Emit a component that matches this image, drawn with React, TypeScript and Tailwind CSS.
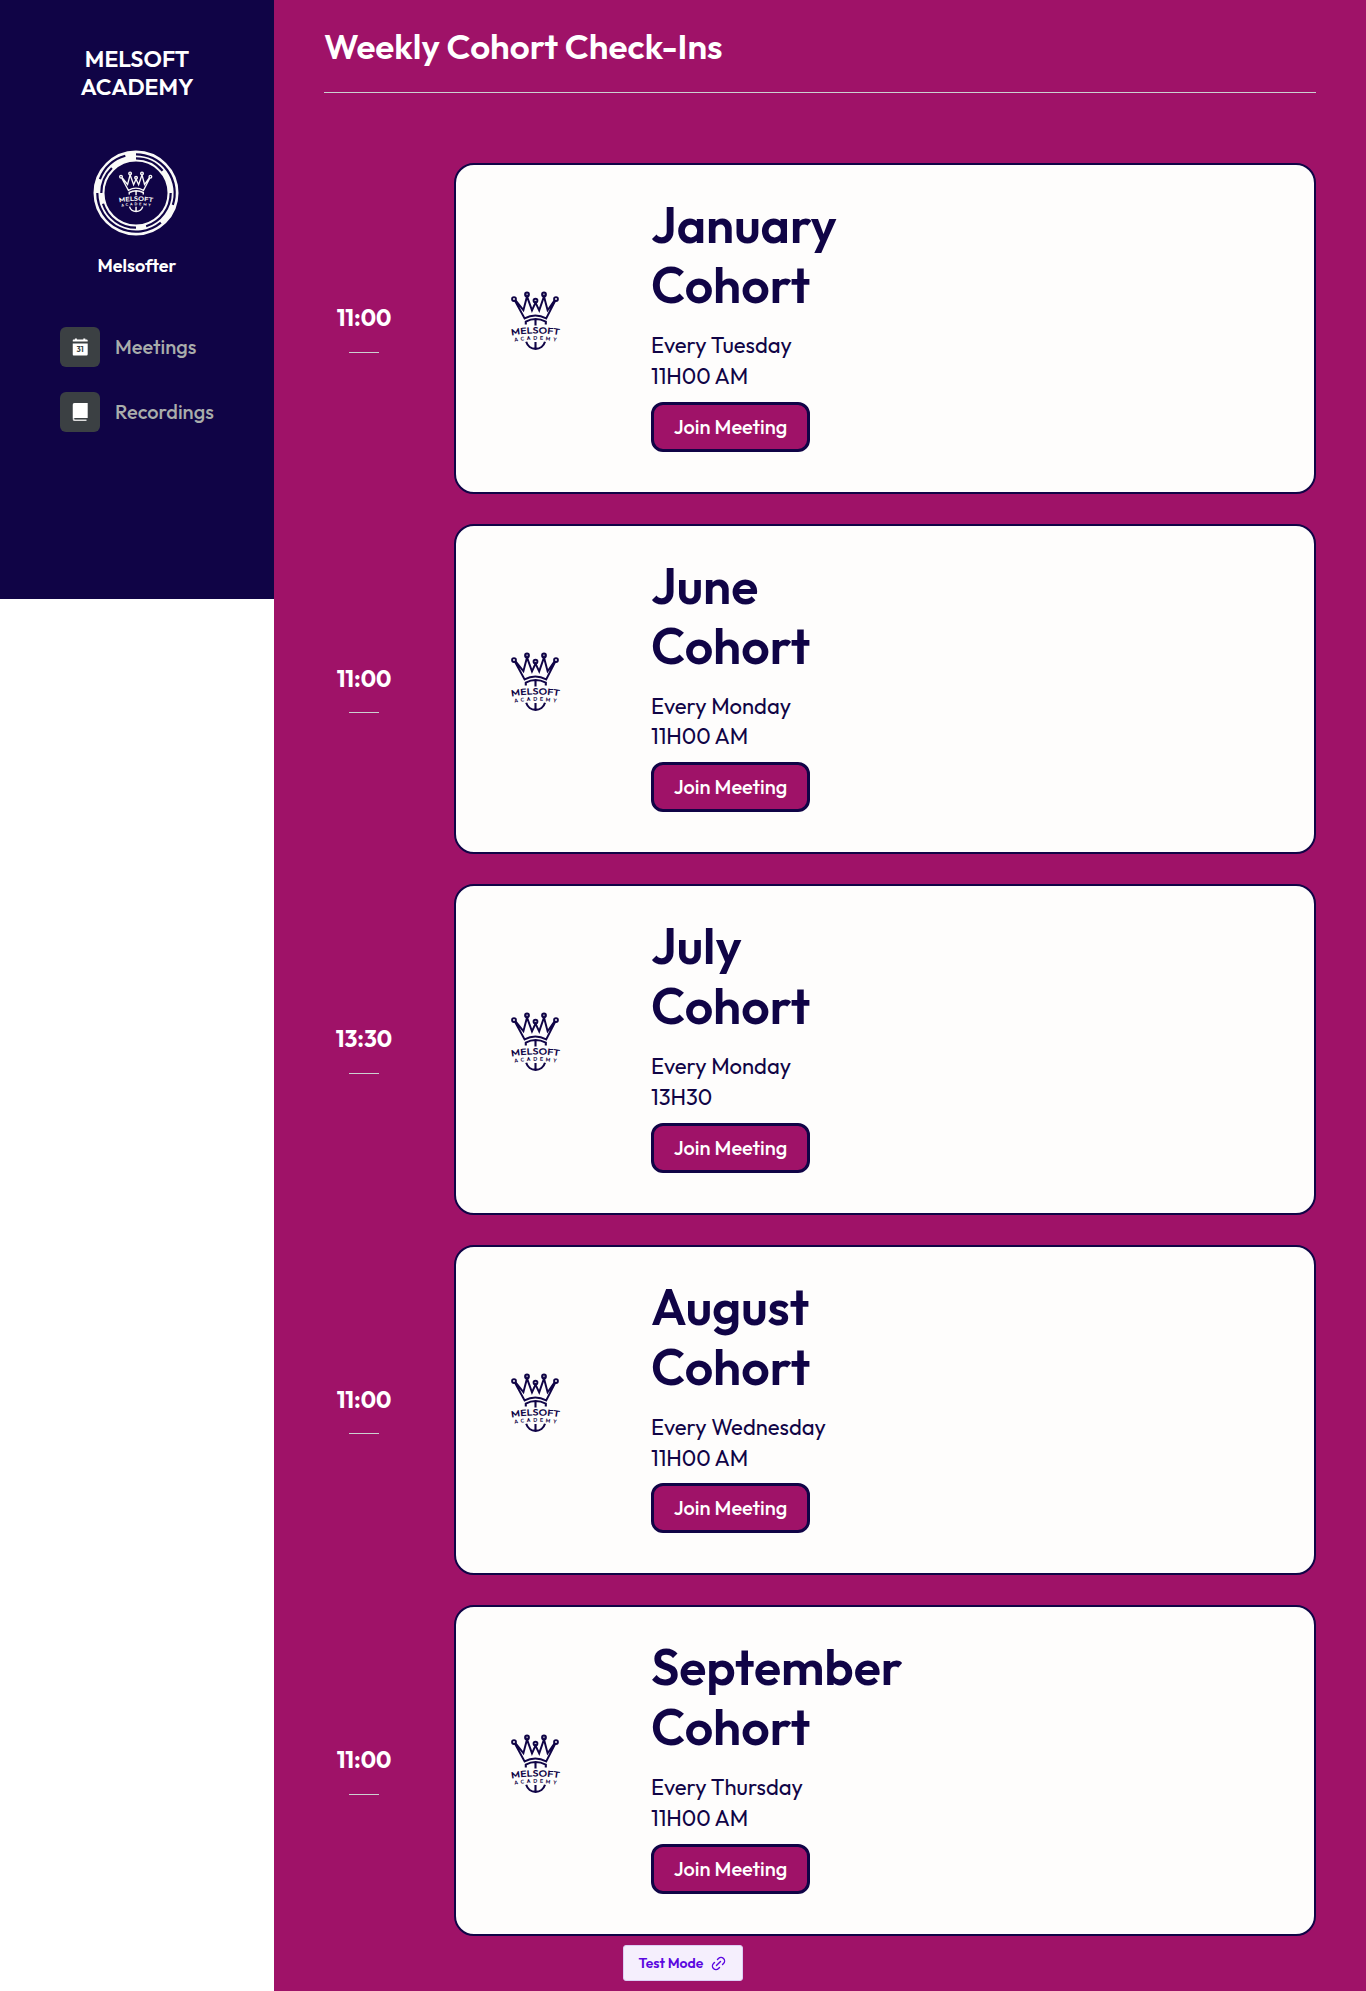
import type { ReactNode } from "react";
import { Link2 } from "lucide-react";

type Cohort = { month: string; day: string; at: string; clock: string };

const cohorts: Cohort[] = [
  { month: "January", day: "Every Tuesday", at: "11H00 AM", clock: "11:00" },
  { month: "June", day: "Every Monday", at: "11H00 AM", clock: "11:00" },
  { month: "July", day: "Every Monday", at: "13H30", clock: "13:30" },
  { month: "August", day: "Every Wednesday", at: "11H00 AM", clock: "11:00" },
  { month: "September", day: "Every Thursday", at: "11H00 AM", clock: "11:00" },
];

function CrownMark({ id }: { id: string }) {
  return (
    <g fill="none" stroke="currentColor" strokeWidth="1.95">
      <circle cx="14" cy="19" r="1.9" />
      <circle cx="27" cy="14.4" r="1.9" />
      <circle cx="35.5" cy="20.6" r="1.9" />
      <circle cx="44" cy="14.4" r="1.9" />
      <circle cx="56" cy="19" r="1.9" />
      <path d="M15 20.8 24.6 38.4Q35.3 32.4 46.2 38.4L55.2 20.8M15.6 20.4 23.4 30.2 27 16.4 32 30.4 35.5 22.6 39.2 30.4 44 16.4 47.6 30.2 54.6 20.4" />
      <path d="M25.8 44.6V41.6Q35.5 36.4 45.8 41.6V44.6M35.5 39.4V45.4" strokeWidth="2.1" />
      <path d="M26.2 61.8A9.8 9.8 0 0 0 45 61.8M35.5 62V68.6" strokeWidth="2.1" />
      <path id={`${id}-name`} d="M11.6 55.6Q35.5 51.4 59.8 55.4" stroke="none" />
      <path id={`${id}-sub`} d="M14.6 61.8Q35.5 57.6 57 61.8" stroke="none" />
      <g fill="currentColor" stroke="none" className="font-[Outfit,Lato,sans-serif] font-semibold">
        <text fontSize="9" textLength="48" lengthAdjust="spacingAndGlyphs">
          <textPath href={`#${id}-name`}>MELSOFT</textPath>
        </text>
        <text fontSize="5.4" textLength="42" lengthAdjust="spacing">
          <textPath href={`#${id}-sub`}>ACADEMY</textPath>
        </text>
      </g>
    </g>
  );
}

function arc(r: number, from: number, to: number) {
  const point = (deg: number) => {
    const a = (deg * Math.PI) / 180;
    return `${(43 + r * Math.sin(a)).toFixed(2)} ${(43 - r * Math.cos(a)).toFixed(2)}`;
  };
  return `M${point(from)}A${r} ${r} 0 ${to - from > 180 ? 1 : 0} 1 ${point(to)}`;
}

function Badge() {
  return (
    <svg viewBox="0 0 86 86" className="size-[86px] text-[#fafaf8]">
      <circle cx="43" cy="43" r="37" fill="none" stroke="currentColor" strokeWidth="11" />
      <g fill="none" stroke="#100446" strokeWidth="2.2">
        <path d={arc(38.7, 0, 108)} />
        <path d={arc(38.7, 140, 270)} />
        <path d={arc(38.7, 291, 344)} />
        <path d={arc(34.7, 0, 50)} />
        <path d={arc(34.7, 90, 163)} />
        <path d={arc(34.7, 180, 252)} />
        <path d={arc(34.7, 270, 316)} />
      </g>
      <g transform="translate(18.2 13.4) scale(0.7)">
        <CrownMark id="badge" />
      </g>
    </svg>
  );
}

function CalendarIcon() {
  return (
    <svg viewBox="0 0 16 18" className="h-[18px] w-4 translate-x-[0.5px]" fill="#fff">
      <path d="M0 2.6Q0 1.4 1.2 1.4H2.4V0.4H4.4V1.4H10.8V0.4H12.8V1.4H14Q15.2 1.4 15.2 2.6V3.6H0ZM0 5.4H15.2V16.2Q15.2 17.4 14 17.4H1.2Q0 17.4 0 16.2Z" />
      <text x="7.6" y="14" fontSize="7.6" textAnchor="middle" fill="#3a3f42" className="font-[Outfit,Lato,sans-serif] font-bold">
        31
      </text>
    </svg>
  );
}

function BookIcon() {
  return (
    <svg viewBox="0 0 16 18" className="h-[18px] w-4 translate-x-[0.5px]" fill="#fff">
      <path d="M2 0H15.2V15H0V2Q0 0 2 0Z" />
      <path d="M0 15V16Q0 18 2 18H14V16.6H2.2L1.6 15Z" fill="#dcdcdc" />
    </svg>
  );
}

function NavItem({ label, children }: { label: string; children: ReactNode }) {
  return (
    <div className="flex items-center gap-[15px]">
      <span className="flex size-10 items-center justify-center rounded-md bg-[#3b4043]">{children}</span>
      <span className="text-xl leading-6 font-medium text-[#a9adab]">{label}</span>
    </div>
  );
}

function CohortRow({ cohort }: { cohort: Cohort }) {
  return (
    <div className="flex h-[330.6px]">
      <div className="flex w-[130px] flex-col items-start pt-[140px] pl-[10px]">
        <div className="flex w-[60px] flex-col items-center">
          <span className="text-[23px] leading-[30px] font-bold">{cohort.clock}</span>
          <span className="mt-[18.7px] h-px w-[30px] bg-[#ccd0d0]" />
        </div>
      </div>
      <div className="flex flex-1 rounded-[20px] border-2 border-[#100446] bg-[#fefdfc] text-[#100446]">
        <div className="flex w-[195px] items-center pb-4 pl-11">
          <svg viewBox="0 0 80 80" className="size-20">
            <CrownMark id={cohort.month} />
          </svg>
        </div>
        <div className="flex flex-col items-start pt-[30px]">
          <h2 className="w-min text-[50px] leading-[60px] font-semibold">{cohort.month} Cohort</h2>
          <p className="mt-[15px] text-[22px] leading-[30.8px]">{cohort.day}</p>
          <p className="text-[22px] leading-[30.8px]">{cohort.at}</p>
          <button className="mt-[10px] h-[50px] w-[159px] rounded-xl border-3 border-[#100446] bg-[#9f1268] text-xl font-medium text-white">
            Join Meeting
          </button>
        </div>
      </div>
    </div>
  );
}

export default function App() {
  return (
    <div className="flex h-[1991px] overflow-hidden bg-white font-[Outfit,Lato,sans-serif] text-white">
      <aside className="w-[274px] shrink-0">
        <div className="flex h-[599px] flex-col items-center bg-[#100446] pt-[45px]">
          <div className="w-min text-center text-[23px] leading-7 font-semibold">MELSOFT ACADEMY</div>
          <div className="mt-[49px] mr-[1.5px] flex justify-center">
            <Badge />
          </div>
          <div className="mt-[18px] text-lg leading-[23px] font-semibold">Melsofter</div>
          <nav className="mt-[50px] flex w-full flex-col gap-[25px] pl-[60px]">
            <NavItem label="Meetings">
              <CalendarIcon />
            </NavItem>
            <NavItem label="Recordings">
              <BookIcon />
            </NavItem>
          </nav>
        </div>
      </aside>
      <main className="relative flex flex-1 flex-col bg-[#9f1268] px-[50px]">
        <h1 className="mt-[23px] text-[35px] leading-[46px] font-semibold">Weekly Cohort Check-Ins</h1>
        <div className="mt-[23px] h-px bg-[#ccd0d0]" />
        <div className="mt-[70px] flex flex-col gap-[30px]">
          {cohorts.map((cohort) => (
            <CohortRow key={cohort.month} cohort={cohort} />
          ))}
        </div>
        <div className="absolute top-[1945px] left-[349px] flex h-9 w-[120px] items-center justify-center gap-[7px] rounded-[3px] border border-[#dccff5] bg-[#f5effd] text-sm font-semibold text-[#5b08e0]">
          Test Mode
          <Link2 size={17} strokeWidth={2} className="-rotate-45" />
        </div>
      </main>
    </div>
  );
}
